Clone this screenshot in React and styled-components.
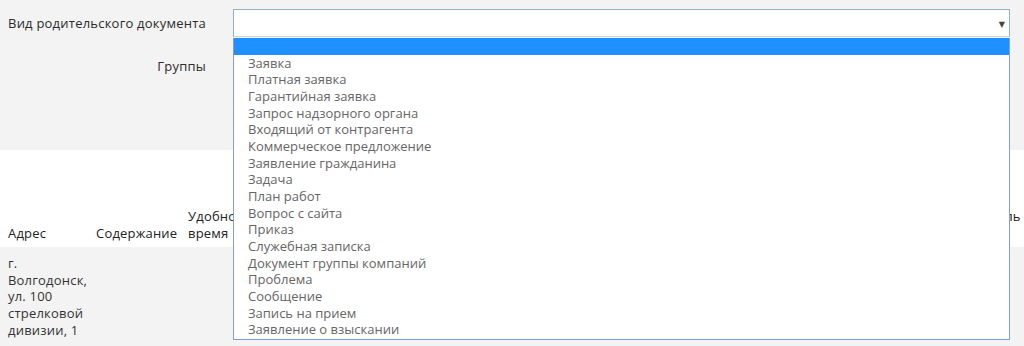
import React from "react";
import styled, { createGlobalStyle } from "styled-components";

const Global = createGlobalStyle`
  html, body { margin: 0; padding: 0; background: #fff; overflow: hidden; }
  body { font-family: "Open Sans", "DejaVu Sans", sans-serif; font-size: 13px; color: #333; }
`;

const Page = styled.div`
  position: relative;
  width: 1024px;
  height: 346px;
  overflow: hidden;
`;

const FilterPanel = styled.div`
  background: #f3f3f3;
  height: 150px;
  padding: 9px 0 0 8px;
  box-sizing: border-box;
  display: grid;
  grid-template-columns: 198px 1fr;
  column-gap: 27px;
  row-gap: 15px;
  grid-auto-rows: 28px;
  align-items: center;
`;

const Label = styled.div`
  text-align: right;
  color: #2b2b2b;
  white-space: nowrap;
  letter-spacing: 0.22px;
`;

const FieldSlot = styled.div`
  position: relative;
  width: 777px;
  height: 28px;
`;

const SelectBox = styled.div`
  height: 28px;
  box-sizing: border-box;
  background: #fff;
  border: 1px solid #8fb3cc;
  border-bottom-color: #c9d3da;
  display: flex;
  align-items: center;
  justify-content: flex-end;
  padding-right: 4px;
`;

const Arrow = styled.span`
  font-size: 8px;
  color: #444;
`;

const List = styled.ul`
  position: absolute;
  top: 29px;
  left: 0;
  width: 777px;
  box-sizing: border-box;
  margin: 0;
  padding: 0 0 1px;
  list-style: none;
  background: #fff;
  border: 1px solid #7f9fd6;
  border-top: none;
  z-index: 2;
`;

const Option = styled.li`
  height: 16.67px;
  line-height: 16.67px;
  padding-left: 14px;
  color: #666;
  white-space: nowrap;
  background: ${(p) => (p.$active ? "#1e90ff" : "transparent")};
`;

const Spacer = styled.div`
  height: 58px;
`;

const Table = styled.div`
  display: grid;
  grid-template-columns: 96px 92px 90px 1fr 90px;
  letter-spacing: 0.2px;
`;

const HeadCell = styled.div`
  padding: 0 0 5px ${(p) => p.$pl || 0}px;
  display: flex;
  align-items: flex-end;
  color: #222;
  line-height: 17px;
`;

const BodyCell = styled.div`
  background: #f3f3f3;
  padding: 8px 6px 20px ${(p) => p.$pl || 0}px;
  line-height: 16.7px;
  color: #333;
`;

const options = [
  "Заявка",
  "Платная заявка",
  "Гарантийная заявка",
  "Запрос надзорного органа",
  "Входящий от контрагента",
  "Коммерческое предложение",
  "Заявление гражданина",
  "Задача",
  "План работ",
  "Вопрос с сайта",
  "Приказ",
  "Служебная записка",
  "Документ группы компаний",
  "Проблема",
  "Сообщение",
  "Запись на прием",
  "Заявление о взыскании",
];

export default function App() {
  return (
    <Page>
      <Global />
      <FilterPanel>
        <Label>Вид родительского документа</Label>
        <FieldSlot>
          <SelectBox>
            <Arrow>▼</Arrow>
          </SelectBox>
          <List>
            <Option $active>&nbsp;</Option>
            {options.map((o) => (
              <Option key={o}>{o}</Option>
            ))}
          </List>
        </FieldSlot>
        <Label>Группы</Label>
        <div />
      </FilterPanel>
      <Spacer />
      <Table>
        <HeadCell $pl={8}>Адрес</HeadCell>
        <HeadCell>Содержание</HeadCell>
        <HeadCell>Удобное<br />время</HeadCell>
        <HeadCell />
        <HeadCell>Исполнитель<br />&nbsp;</HeadCell>
        <BodyCell $pl={8}>г. Волгодонск, ул. 100 стрелковой дивизии, 1</BodyCell>
        <BodyCell />
        <BodyCell />
        <BodyCell />
        <BodyCell />
      </Table>
    </Page>
  );
}
